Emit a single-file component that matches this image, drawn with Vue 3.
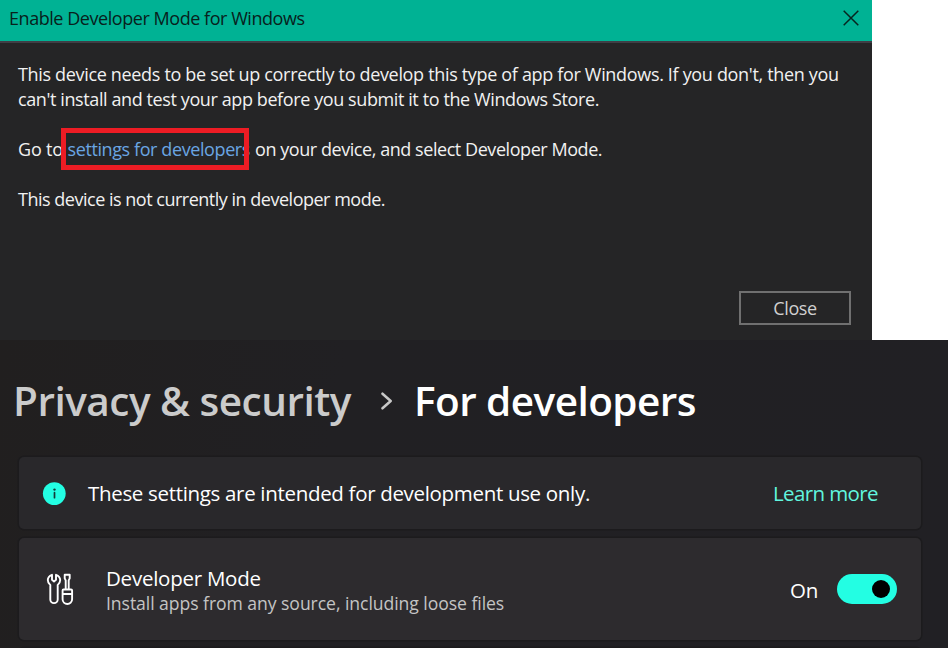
<script setup>
import { ref } from 'vue'

const enabled = ref(true)
</script>

<template>
  <main class="page">
    <section class="dialog">
      <header class="titlebar">
        <span class="title">Enable Developer Mode for Windows</span>
        <svg class="dismiss" width="16" height="16" viewBox="0 0 16 16">
          <path d="M.7.7 15.3 15.3M15.3.7.7 15.3" fill="none" stroke="#06251f" stroke-width="1.5" />
        </svg>
      </header>
      <div class="message">
        <p><span class="l1">This device needs to be set up correctly to develop this type of app for Windows. If you don't, then you</span><br><span class="l2">can't install and test your app before you submit it to the Windows Store.</span></p>
        <p><span class="l3">Go to </span><a class="link">settings for developers<i class="marker"></i></a><span class="l4">on your device, and select Developer Mode.</span></p>
        <p><span class="l5">This device is not currently in developer mode.</span></p>
      </div>
      <footer class="actions">
        <button class="close">Close</button>
      </footer>
    </section>

    <section class="settings">
      <h1 class="crumbs">
        <span class="parent">Privacy &amp; security</span>
        <svg class="chevron" width="12" height="18" viewBox="0 0 12 18">
          <path d="M1.500 1.700 9.700 9 1.500 16.300" fill="none" stroke="#c8c8c8" stroke-width="2.500" stroke-linecap="round" stroke-linejoin="round" />
        </svg>
        <span class="current">For developers</span>
      </h1>

      <div class="card info">
        <svg class="info-icon" width="24" height="24" viewBox="0 0 24 24">
          <circle cx="12.300" cy="12.600" r="11.400" fill="#23fee3" />
          <circle cx="12.500" cy="8.600" r="1.200" fill="#143b38" />
          <path d="M12.500 11.700v5" stroke="#143b38" stroke-width="1.700" stroke-linecap="round" />
        </svg>
        <span class="info-text">These settings are intended for development use only.</span>
        <a class="learn">Learn more</a>
      </div>

      <div class="card mode">
        <svg class="tools" width="28" height="32" viewBox="0 0 28 32" fill="none" stroke="#fff" stroke-width="1.900" stroke-linejoin="round" stroke-linecap="round">
          <path d="M6 1.800v5l2 1.600 2-1.600v-5c2.700 1 4.200 3 4.200 5.300 0 2.200-1 3.800-2.500 4.900v14.400a3.700 3.700 0 0 1-7.400 0V12c-1.500-1.100-2.500-2.700-2.500-4.900 0-2.300 1.500-4.300 4.200-5.300z" />
          <path d="M18.700 1.800h5v3.500l-1 2v9.200h-3V7.300l-1-2zM17.500 16.500h7.600c.6 0 1 .4 1 1v8.800a4.700 4.700 0 0 1-9.500 0v-8.800c0-.6.300-1 .9-1zM16.700 21h9.300" />
        </svg>
        <div class="labels">
          <span class="name">Developer Mode</span>
          <span class="desc">Install apps from any source, including loose files</span>
        </div>
        <span class="state">{{ enabled ? 'On' : 'Off' }}</span>
        <span class="toggle" :class="{ off: !enabled }" @click="enabled = !enabled"></span>
      </div>
      <div class="card next"></div>
    </section>
  </main>
</template>

<style>
body {
  background: #fff;
}
</style>

<style scoped>
.page {
  width: 948px;
  height: 648px;
  overflow: hidden;
  font-family: "Open Sans", "Noto Sans", sans-serif;
  white-space: nowrap;
}
.dialog {
  display: flex;
  flex-direction: column;
  box-sizing: border-box;
  width: 872px;
  height: 340px;
  background: #252526;
}
.titlebar {
  display: flex;
  align-items: center;
  justify-content: space-between;
  box-sizing: border-box;
  height: 43px;
  padding: 0 13px 5px 9px;
  background: #00b294;
  border-bottom: 2px solid #3f3f46;
}
.title {
  font-size: 18px;
  line-height: 24px;
  letter-spacing: -0.45px;
  color: #08211c;
}
.message {
  padding: 19px 18px 0;
  flex: 1;
  font-size: 18px;
  line-height: 25px;
  color: #f1f1f1;
}
.message p {
  margin: 0 0 25px;
  white-space: pre;
}
.l1 {
  letter-spacing: -0.33px;
}
.l2 {
  letter-spacing: -0.4px;
}
.l3 {
  letter-spacing: -0.17px;
}
.l4 {
  letter-spacing: -0.44px;
}
.l5 {
  letter-spacing: -0.49px;
}
.link {
  position: relative;
  margin-right: 5px;
  letter-spacing: -0.4px;
  color: #6aa5e3;
}
.marker {
  position: absolute;
  left: -7px;
  top: -9px;
  box-sizing: border-box;
  width: 188px;
  height: 42px;
  border: 5px solid #ed1c24;
}
.actions {
  display: flex;
  justify-content: flex-end;
  padding: 0 21px 15px 0;
}
.close {
  box-sizing: border-box;
  width: 112px;
  height: 34px;
  padding: 0;
  border: 2px solid #707070;
  background: transparent;
  font: 18px/30px "Open Sans", "Noto Sans", sans-serif;
  letter-spacing: -0.4px;
  color: #d0d0d0;
}
.settings {
  display: flex;
  flex-direction: column;
  box-sizing: border-box;
  height: 308px;
  padding: 31px 27px 0 19px;
  background: linear-gradient(100deg, #211f1f 0, #212023 35%, #212024 100%);
}
.crumbs {
  display: flex;
  align-items: center;
  height: 60px;
  margin: 0 0 26px -6px;
  font-size: 40.5px;
  line-height: 60px;
  font-weight: 600;
}
.parent {
  width: 339px;
  letter-spacing: -0.5px;
  color: #cbcbcb;
}
.current {
  margin-left: -1px;
  letter-spacing: -0.55px;
  color: #fff;
}
.chevron {
  margin: 0 22px 0 29px;
}
.card {
  display: flex;
  align-items: center;
  box-sizing: border-box;
  flex: none;
  border-radius: 5px;
  box-shadow: 0 0 0 1.5px #1c1b1d;
}
.info {
  height: 72px;
  padding: 0 43px 0 23px;
  background: #29282b;
}
.info-icon {
  margin-right: 22px;
}
.info-text,
.learn,
.name,
.state {
  font-size: 20.5px;
  color: #fff;
}
.info-text {
  letter-spacing: -0.32px;
}
.info .learn {
  margin-left: auto;
  letter-spacing: -0.6px;
  color: #61f5df;
}
.mode {
  height: 102px;
  margin-top: 9px;
  padding: 0 24px 0 27px;
  background: #2d2b2e;
}
.labels {
  display: flex;
  flex-direction: column;
  margin-left: 32px;
  padding-top: 2px;
}
.name {
  line-height: 26px;
  letter-spacing: -0.25px;
}
.desc {
  font-size: 17.6px;
  line-height: 24px;
  letter-spacing: -0.06px;
  color: #c4c4c4;
}
.state {
  margin-left: auto;
  margin-right: 19px;
  padding-top: 2px;
  letter-spacing: -0.3px;
}
.toggle {
  display: flex;
  align-items: center;
  justify-content: flex-end;
  box-sizing: border-box;
  width: 60px;
  height: 30px;
  padding: 0 7px;
  border-radius: 15px;
  background: #23fee3;
}
.toggle::before {
  content: "";
  width: 18px;
  height: 18px;
  border-radius: 50%;
  background: #000;
}
.toggle.off {
  justify-content: flex-start;
}
.next {
  height: 20px;
  margin-top: 8px;
  background: #241c20;
}
</style>
